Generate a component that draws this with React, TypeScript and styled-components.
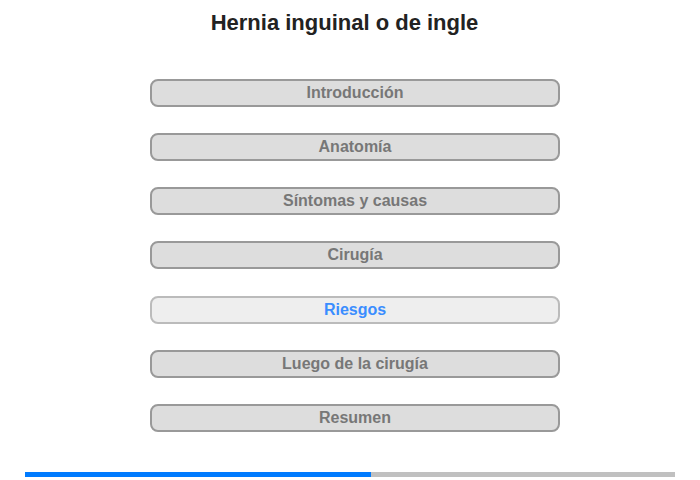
import React from "react";
import styled, { createGlobalStyle } from "styled-components";

const Global = createGlobalStyle`
  html, body { margin: 0; padding: 0; background: #fff; }
  body { font-family: "Liberation Sans", Arial, sans-serif; }
`;

const Page = styled.div`
  width: 700px;
  height: 480px;
  display: flex;
  flex-direction: column;
  align-items: center;
`;

const Title = styled.h1`
  margin: 10px 11px 0 0;
  font-size: 22px;
  line-height: 26px;
  font-weight: bold;
  color: #222;
  text-align: center;
`;

const Menu = styled.nav`
  margin: 43px 0 0 10px;
  display: flex;
  flex-direction: column;
  gap: 26px;
`;

const Item = styled.div<{ $active?: boolean }>`
  box-sizing: border-box;
  width: 410px;
  height: 28px;
  border: 2px solid ${(p) => (p.$active ? "#bbb" : "#999")};
  border-radius: 8px;
  background: ${(p) => (p.$active ? "#eee" : "#ddd")};
  color: ${(p) => (p.$active ? "#3a8dff" : "#777")};
  font-size: 16px;
  font-weight: bold;
  display: flex;
  align-items: center;
  justify-content: center;
  margin-top: ${(p) => (p.$active ? "1px" : "0")};
`;

const Progress = styled.div`
  margin-top: auto;
  margin-bottom: 3px;
  width: 650px;
  height: 5px;
  background: #c0c0c0;
  display: flex;
`;

const Fill = styled.div`
  height: 100%;
  background: #007bff;
`;

const items = [
  "Introducción",
  "Anatomía",
  "Síntomas y causas",
  "Cirugía",
  "Riesgos",
  "Luego de la cirugía",
  "Resumen",
];

export default function App() {
  const active = 4;
  return (
    <Page>
      <Global />
      <Title>Hernia inguinal o de ingle</Title>
      <Menu>
        {items.map((t, i) => (
          <Item key={t} $active={i === active}>
            {t}
          </Item>
        ))}
      </Menu>
      <Progress>
        <Fill style={{ width: `${(346 / 650) * 100}%` }} />
      </Progress>
    </Page>
  );
}
